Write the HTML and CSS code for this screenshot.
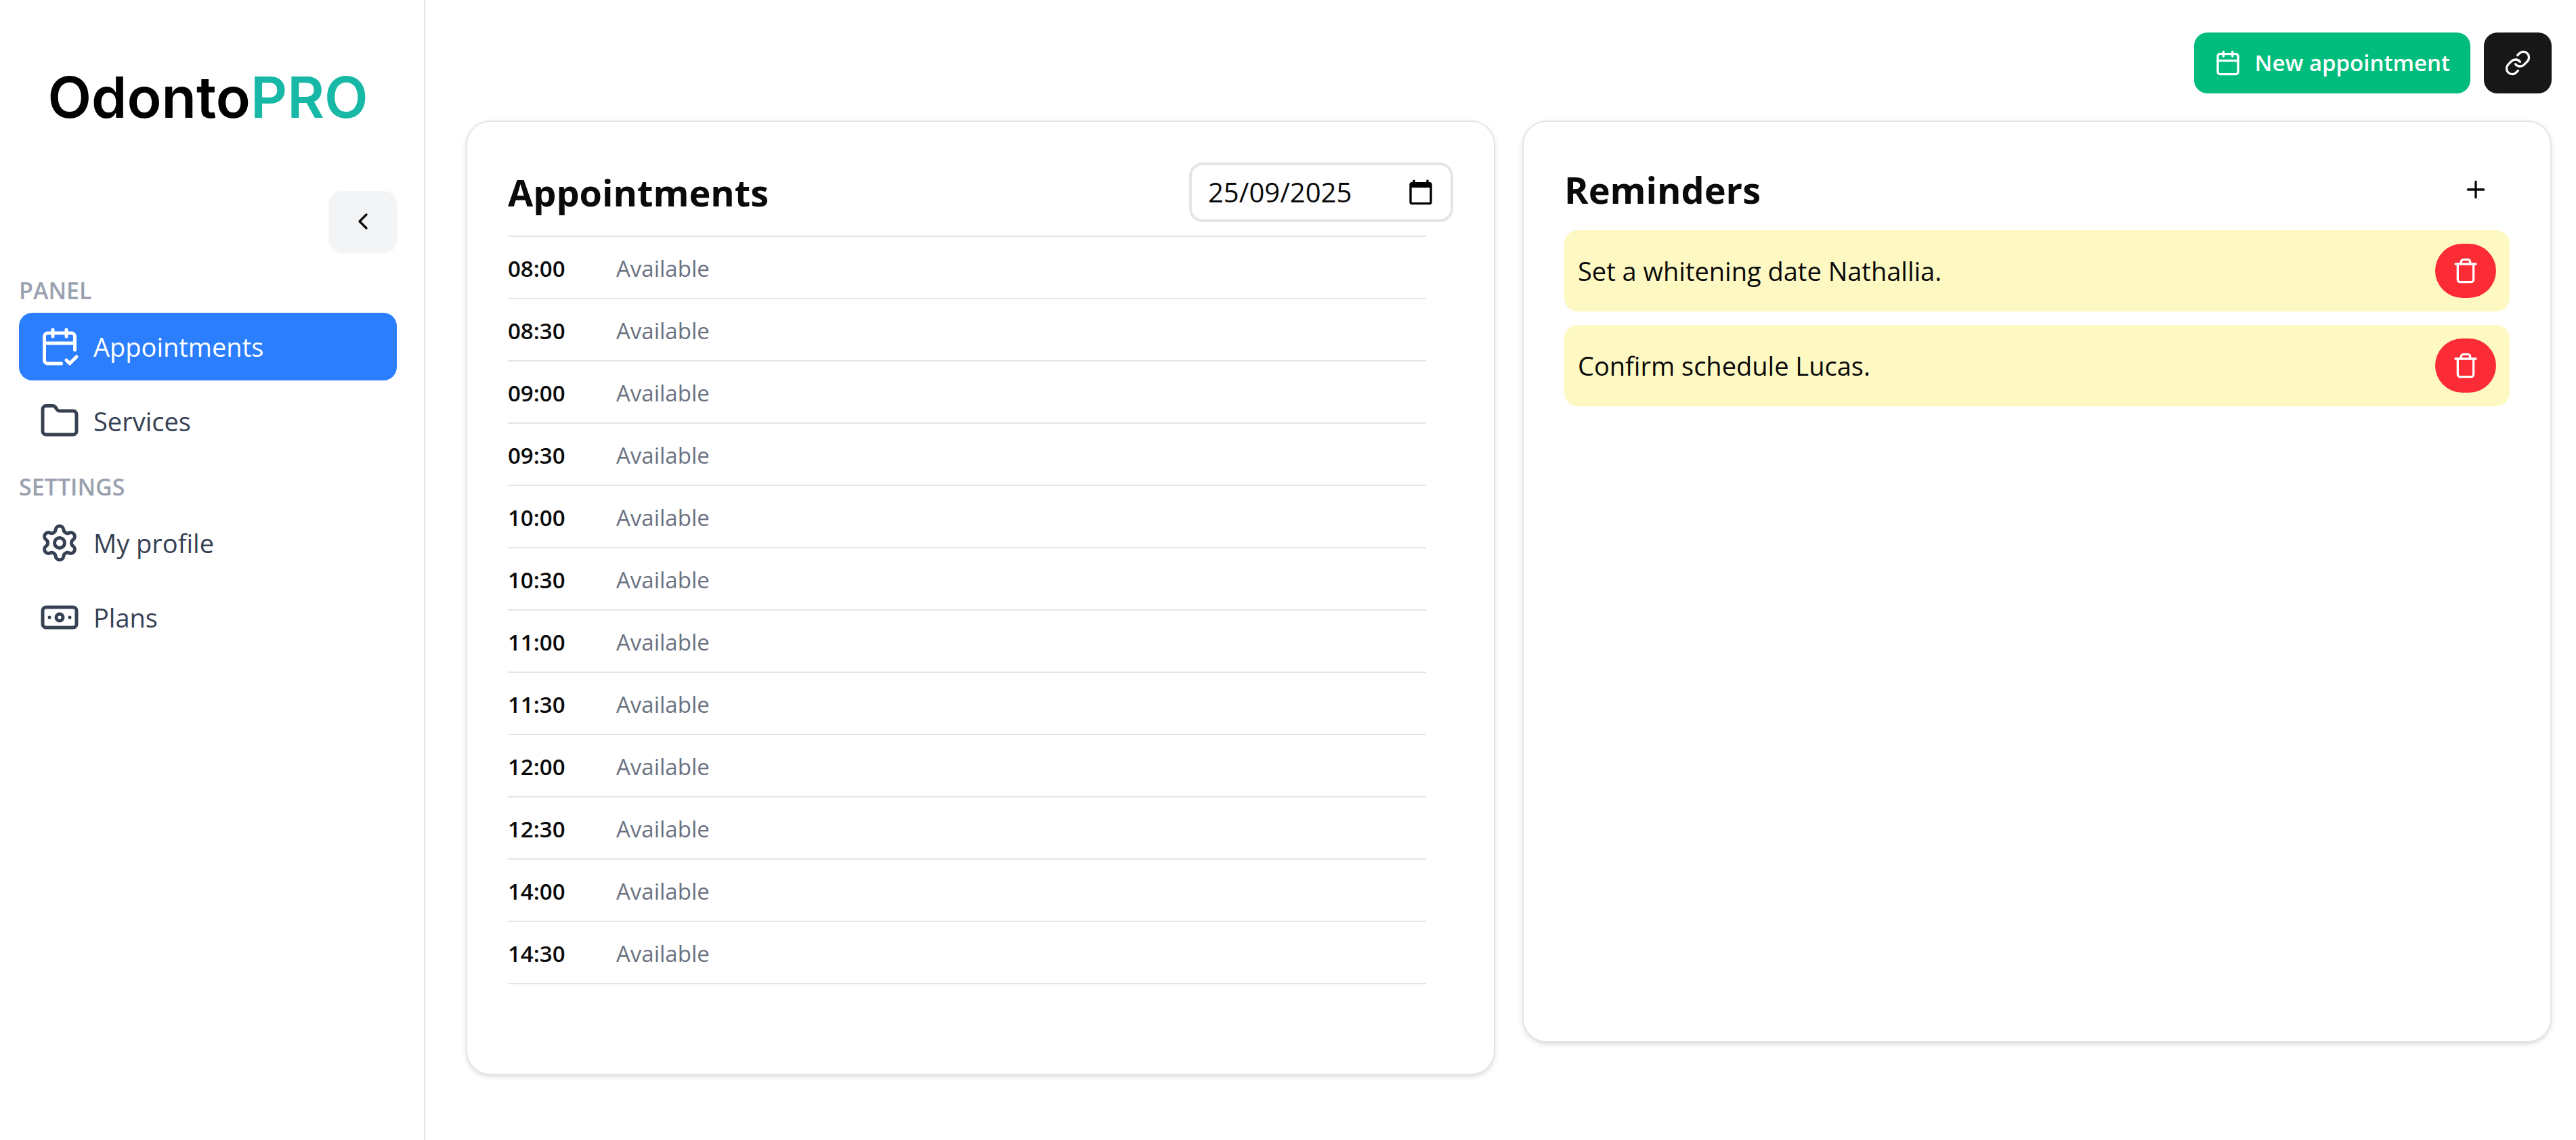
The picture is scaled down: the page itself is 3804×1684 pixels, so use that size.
FILE: index.html
```html
<!DOCTYPE html>
<html lang="en">
<head>
<meta charset="utf-8">
<meta name="viewport" content="width=device-width, initial-scale=1">
<title>OdontoPRO - Appointments</title>
<link rel="stylesheet" href="styles.css">
</head>
<body>
<div class="layout">
  <aside class="sidebar">
    <a class="logo" href="#">Odonto<span class="logo-accent">PRO</span></a>
    <button class="button button-collapse" type="button" aria-label="Collapse sidebar">
      <svg class="icon" viewBox="0 0 24 24"><path d="m15 18-6-6 6-6"/></svg>
    </button>
    <nav class="nav">
      <h2 class="nav-label">PANEL</h2>
      <a class="nav-item nav-item-active" href="#" aria-current="page">
        <svg class="icon icon-large" viewBox="0 0 24 24"><path d="M8 2v4"/><path d="M16 2v4"/><path d="M21 14V6a2 2 0 0 0-2-2H5a2 2 0 0 0-2 2v14a2 2 0 0 0 2 2h8"/><path d="M3 10h18"/><path d="m16 20 2 2 4-4"/></svg>
        Appointments
      </a>
      <a class="nav-item" href="#">
        <svg class="icon icon-large" viewBox="0 0 24 24"><path d="M20 20a2 2 0 0 0 2-2V8a2 2 0 0 0-2-2h-7.900a2 2 0 0 1-1.690-.9L9.600 3.900A2 2 0 0 0 7.930 3H4a2 2 0 0 0-2 2v13a2 2 0 0 0 2 2Z"/></svg>
        Services
      </a>
      <h2 class="nav-label">SETTINGS</h2>
      <a class="nav-item" href="#">
        <svg class="icon icon-large" viewBox="0 0 24 24"><path d="M9.671 4.136a2.340 2.340 0 0 1 4.659 0 2.340 2.340 0 0 0 3.319 1.915 2.340 2.340 0 0 1 2.330 4.033 2.340 2.340 0 0 0 0 3.831 2.340 2.340 0 0 1-2.330 4.033 2.340 2.340 0 0 0-3.319 1.915 2.340 2.340 0 0 1-4.659 0 2.340 2.340 0 0 0-3.320-1.915 2.340 2.340 0 0 1-2.330-4.033 2.340 2.340 0 0 0 0-3.831A2.340 2.340 0 0 1 6.350 6.051a2.340 2.340 0 0 0 3.319-1.915"/><circle cx="12" cy="12" r="3"/></svg>
        My profile
      </a>
      <a class="nav-item" href="#">
        <svg class="icon icon-large" viewBox="0 0 24 24"><rect width="20" height="12" x="2" y="6" rx="2"/><circle cx="12" cy="12" r="2"/><path d="M6 12h.01M18 12h.01"/></svg>
        Plans
      </a>
    </nav>
  </aside>

  <main class="main">
    <div class="toolbar">
      <button class="button button-primary" type="button">
        <svg class="icon" viewBox="0 0 24 24"><path d="M8 2v4"/><path d="M16 2v4"/><rect width="18" height="18" x="3" y="4" rx="2"/><path d="M3 10h18"/></svg>
        New appointment
      </button>
      <button class="button button-dark" type="button" aria-label="Copy link">
        <svg class="icon" viewBox="0 0 24 24"><path d="M10 13a5 5 0 0 0 7.540.54l3-3a5 5 0 0 0-7.070-7.070l-1.720 1.710"/><path d="M14 11a5 5 0 0 0-7.540-.54l-3 3a5 5 0 0 0 7.070 7.070l1.710-1.710"/></svg>
      </button>
    </div>

    <div class="cards">
      <section class="card">
        <header class="card-header">
          <h1 class="card-title">Appointments</h1>
          <div class="date-field">
            <input class="date-input" type="text" inputmode="numeric" value="25/09/2025" aria-label="Date">
            <button class="date-button" type="button" aria-label="Open calendar">
              <svg class="date-icon" viewBox="0 0 24 24"><path d="M20 3h-1V1h-2v2H7V1H5v2H4c-1.100 0-2 .9-2 2v16c0 1.100.9 2 2 2h16c1.100 0 2-.9 2-2V5c0-1.100-.9-2-2-2zm0 18H4V8h16v13z"/></svg>
            </button>
          </div>
        </header>
        <div class="schedule">
          <table class="slots">
            <tbody>
              <tr><th scope="row">08:00</th><td>Available</td></tr>
              <tr><th scope="row">08:30</th><td>Available</td></tr>
              <tr><th scope="row">09:00</th><td>Available</td></tr>
              <tr><th scope="row">09:30</th><td>Available</td></tr>
              <tr><th scope="row">10:00</th><td>Available</td></tr>
              <tr><th scope="row">10:30</th><td>Available</td></tr>
              <tr><th scope="row">11:00</th><td>Available</td></tr>
              <tr><th scope="row">11:30</th><td>Available</td></tr>
              <tr><th scope="row">12:00</th><td>Available</td></tr>
              <tr><th scope="row">12:30</th><td>Available</td></tr>
              <tr><th scope="row">14:00</th><td>Available</td></tr>
              <tr><th scope="row">14:30</th><td>Available</td></tr>
            </tbody>
          </table>
        </div>
      </section>

      <section class="card card-reminders">
        <header class="card-header">
          <h2 class="card-title">Reminders</h2>
          <button class="button button-ghost" type="button" aria-label="Add reminder">
            <svg class="icon" viewBox="0 0 24 24"><path d="M5 12h14"/><path d="M12 5v14"/></svg>
          </button>
        </header>
        <ul class="reminders">
          <li class="reminder">
            <p class="reminder-text">Set a whitening date Nathallia.</p>
            <button class="button button-delete" type="button" aria-label="Delete reminder">
              <svg class="icon" viewBox="0 0 24 24"><path d="M3 6h18"/><path d="M19 6v14c0 1-1 2-2 2H7c-1 0-2-1-2-2V6"/><path d="M8 6V4c0-1 1-2 2-2h4c1 0 2 1 2 2v2"/></svg>
            </button>
          </li>
          <li class="reminder">
            <p class="reminder-text">Confirm schedule Lucas.</p>
            <button class="button button-delete" type="button" aria-label="Delete reminder">
              <svg class="icon" viewBox="0 0 24 24"><path d="M3 6h18"/><path d="M19 6v14c0 1-1 2-2 2H7c-1 0-2-1-2-2V6"/><path d="M8 6V4c0-1 1-2 2-2h4c1 0 2 1 2 2v2"/></svg>
            </button>
          </li>
        </ul>
      </section>
    </div>
  </main>
</div>
</body>
</html>
```
FILE: styles.css
```css
:root {
  --text: #0a0a0a;
  --muted: #6a7282;
  --border: #e5e5e5;
  --radius: 20px;
  --text-small: 33px;
  --text-label: 34px;
  --text-base: 38px;
  --text-input: 40px;
  --text-title: 54px;
}

* {
  box-sizing: border-box;
  margin: 0;
  padding: 0;
}

body {
  background: #fff;
  color: var(--text);
  font-family: "Segoe UI", "Open Sans", "Noto Sans", sans-serif;
  font-size: var(--text-base);
  line-height: 60px;
}

a {
  color: inherit;
  text-decoration: none;
}

button,
input {
  border: 0;
  background: none;
  color: inherit;
  font: inherit;
}

ul {
  list-style: none;
}

.icon {
  flex: none;
  width: 40px;
  height: 40px;
  fill: none;
  stroke: currentColor;
  stroke-width: 2;
  stroke-linecap: round;
  stroke-linejoin: round;
}

.icon-large {
  width: 60px;
  height: 60px;
}

.layout {
  display: flex;
  min-height: 100vh;
}

/* Sidebar */

.sidebar {
  display: flex;
  flex: none;
  flex-direction: column;
  width: 628px;
  padding: 84px 40px 40px 28px;
  border-right: 2px solid var(--border);
}

.logo {
  align-self: center;
  font-family: Inter, "Open Sans", sans-serif;
  font-size: 84px;
  font-weight: 600;
  line-height: 120px;
  color: #000;
}

.logo-accent {
  color: #17b8a6;
}

.nav {
  display: flex;
  flex-direction: column;
  gap: 10px;
  margin-top: 20px;
}

.nav-label {
  margin: 12px 0 -2px;
  color: #99a1af;
  font-size: var(--text-label);
  font-weight: 600;
  line-height: 50px;
}

.nav-item {
  display: flex;
  align-items: center;
  gap: 20px;
  padding: 20px 30px;
  border-radius: var(--radius);
  color: #364153;
}

.nav-item-active {
  background: #2b7fff;
  color: #fff;
}

/* Buttons */

.button {
  display: flex;
  flex: none;
  align-items: center;
  justify-content: center;
  gap: 20px;
  width: 100px;
  height: 90px;
  border-radius: var(--radius);
  font-size: var(--text-small);
  font-weight: 600;
}

.button-collapse {
  align-self: flex-end;
  margin-top: 78px;
  background: #f3f4f6;
  box-shadow: 0 2px 4px rgb(0 0 0 / 5%);
}

.button-primary {
  width: auto;
  padding: 0 30px;
  background: #00bc7d;
  color: #fff;
}

.button-dark {
  background: #171717;
  color: #fff;
}

.button-ghost {
  height: 80px;
}

.button-delete {
  width: 90px;
  height: 80px;
  border-radius: 45px;
  background: #fb2c36;
  color: #fff;
}

/* Main area */

.main {
  flex: 1;
  min-width: 0;
  padding: 48px 36px 40px 60px;
}

.toolbar {
  display: flex;
  justify-content: flex-end;
  gap: 20px;
  margin-bottom: 40px;
}

.cards {
  display: grid;
  grid-template-columns: 1fr 1fr;
  align-items: start;
  gap: 40px;
}

.card {
  padding: 60px;
  border: 2px solid var(--border);
  border-radius: 36px;
  background: #fff;
  box-shadow: 0 3px 8px rgb(0 0 0 / 10%), 0 3px 5px -3px rgb(0 0 0 / 10%);
}

.card-reminders {
  min-height: 1362px;
}

.card-header {
  display: flex;
  align-items: center;
  justify-content: space-between;
  margin-bottom: 20px;
}

.card-title {
  font-size: var(--text-title);
  font-weight: 700;
  line-height: 80px;
}

.date-field {
  display: flex;
  align-items: center;
  justify-content: space-between;
  width: 390px;
  height: 88px;
  padding: 0 24px;
  border: 4px solid var(--border);
  border-radius: var(--radius);
}

.date-input {
  width: 240px;
  font-size: var(--text-input);
}

.date-button {
  display: flex;
}

.date-icon {
  width: 40px;
  height: 40px;
  fill: #000;
}

.schedule {
  padding: 0 40px 72px 0;
}

.slots {
  width: 100%;
  border-top: 2px solid var(--border);
  border-spacing: 0;
  font-size: var(--text-small);
}

.slots th,
.slots td {
  height: 92px;
  padding-top: 4px;
  border-bottom: 2px solid var(--border);
  text-align: left;
}

.slots th {
  width: 160px;
  font-weight: 600;
}

.slots td {
  color: var(--muted);
}

.reminders {
  display: grid;
  gap: 20px;
}

.reminder {
  display: flex;
  align-items: center;
  justify-content: space-between;
  padding: 20px;
  border-radius: var(--radius);
  background: #fef9c2;
}
```
